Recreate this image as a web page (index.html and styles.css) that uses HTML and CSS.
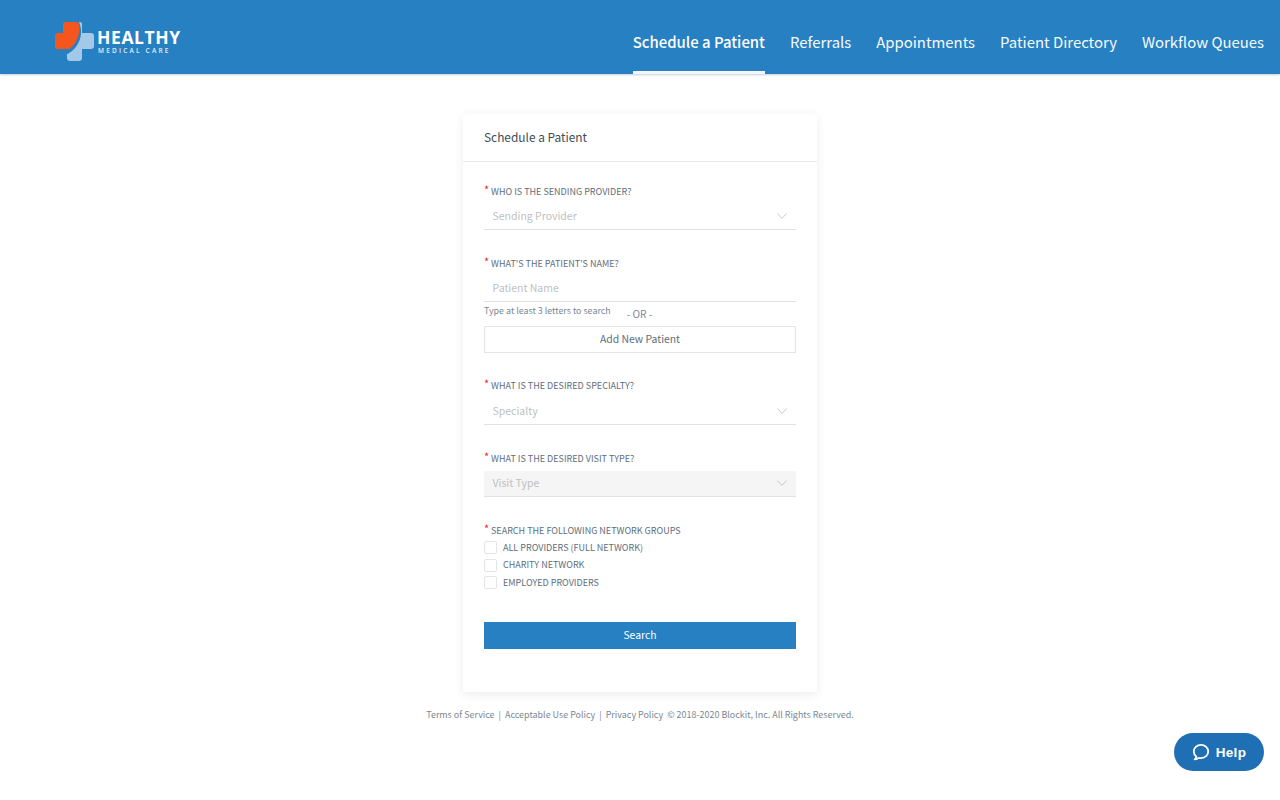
FILE: index.html
```html
<!DOCTYPE html>
<html lang="en">
<head>
<meta charset="utf-8">
<title>Schedule a Patient</title>
<link rel="stylesheet" href="styles.css">
</head>
<body>
<header class="topbar">
  <div class="logo">
    <svg class="logo-mark" width="42" height="42" viewBox="0 0 42 42">
      <path d="M25 1 H26 Q28 1 28 3 V12 H37 Q40 12 40 15 V25 Q40 28 37 28 H28 V37 Q28 40 25 40 H16 Q13 40 13 37 V33 C23 29 31 15 25 1 Z" fill="#a3c8e8"/>
      <path d="M11 1 H22 C25.500 1 26 5 25.500 9 C24.500 18 21 24 15 28 H4 Q1 28 1 25 V15 Q1 12 4 12 H9 V3 Q9 1 11 1 Z" fill="#f4561d"/>
    </svg>
    <div class="logo-text">
      <div class="logo-name">HEALTHY</div>
      <div class="logo-sub">MEDICAL CARE</div>
    </div>
  </div>
  <nav class="nav">
    <a class="nav-item active">Schedule a Patient</a>
    <a class="nav-item">Referrals</a>
    <a class="nav-item">Appointments</a>
    <a class="nav-item">Patient Directory</a>
    <a class="nav-item">Workflow Queues</a>
  </nav>
</header>

<main class="main">
  <section class="card">
    <h1 class="card-title">Schedule a Patient</h1>
    <form class="card-body">
      <div class="field">
        <div class="label"><span class="req">*</span>WHO IS THE SENDING PROVIDER?</div>
        <div class="control">
          <span class="placeholder">Sending Provider</span>
          <svg class="chev" width="10" height="6" viewBox="0 0 10 6"><path d="M.5.5 5 5.500 9.500.5" fill="none" stroke="#c4c8cc"/></svg>
        </div>
      </div>
      <div class="field">
        <div class="label"><span class="req">*</span>WHAT'S THE PATIENT'S NAME?</div>
        <div class="control">
          <span class="placeholder">Patient Name</span>
        </div>
        <div class="hint-row">
          <span class="hint">Type at least 3 letters to search</span>
          <span class="or">- OR -</span>
        </div>
        <div class="outline-btn">Add New Patient</div>
      </div>
      <div class="field">
        <div class="label label-up"><span class="req">*</span>WHAT IS THE DESIRED SPECIALTY?</div>
        <div class="control">
          <span class="placeholder">Specialty</span>
          <svg class="chev" width="10" height="6" viewBox="0 0 10 6"><path d="M.5.5 5 5.500 9.500.5" fill="none" stroke="#c4c8cc"/></svg>
        </div>
      </div>
      <div class="field">
        <div class="label"><span class="req">*</span>WHAT IS THE DESIRED VISIT TYPE?</div>
        <div class="control disabled">
          <span class="placeholder">Visit Type</span>
          <svg class="chev" width="10" height="6" viewBox="0 0 10 6"><path d="M.5.5 5 5.500 9.500.5" fill="none" stroke="#c4c8cc"/></svg>
        </div>
      </div>
      <div class="field field-checks">
        <div class="label"><span class="req">*</span>SEARCH THE FOLLOWING NETWORK GROUPS</div>
        <div class="check-row"><span class="box"></span>ALL PROVIDERS (FULL NETWORK)</div>
        <div class="check-row"><span class="box"></span>CHARITY NETWORK</div>
        <div class="check-row"><span class="box"></span>EMPLOYED PROVIDERS</div>
      </div>
      <div class="primary-btn">Search</div>
    </form>
  </section>
  <footer class="footer">
    <span>Terms of Service</span><span class="sep">|</span><span>Acceptable Use Policy</span><span class="sep">|</span><span>Privacy Policy</span><span class="copy">© 2018-2020 Blockit, Inc. All Rights Reserved.</span>
  </footer>
</main>

<div class="help">
  <svg width="18" height="18" viewBox="0 0 18 18"><path d="M2.600 16.400 C4.500 16.200 5.800 15.700 6.600 14.800 C7.300 15 8.100 15.100 9 15.100 C13.200 15.100 16.200 12.200 16.200 8.500 C16.200 4.800 13.200 1.900 9 1.900 C4.800 1.900 1.800 4.800 1.800 8.500 C1.800 10.500 2.700 12.200 4.200 13.400 C4.200 14.600 3.600 15.600 2.600 16.400 Z" fill="none" stroke="#fff" stroke-width="1.800" stroke-linejoin="round"/></svg>
  <span>Help</span>
</div>
</body>
</html>
```
FILE: styles.css
```css
* { box-sizing: border-box; }
html, body { margin: 0; padding: 0; }
body {
  width: 1280px;
  height: 800px;
  overflow: hidden;
  background: #fff;
  font-family: "Noto Sans CJK SC", "Noto Sans", sans-serif;
  color: #52606d;
}
.topbar {
  height: 74px;
  background: #2680c2;
  box-shadow: 0 1px 2px rgba(60, 90, 130, .3);
  display: flex;
  justify-content: space-between;
  padding: 0 16px 0 54px;
}
.logo { display: flex; align-items: flex-start; padding-top: 21px; gap: 1px; }
.logo-mark { display: block; }
.logo-name {
  font-family: "Open Sans", sans-serif;
  font-weight: 700;
  font-size: 17.500px;
  line-height: 16px;
  letter-spacing: .6px;
  color: #fff;
  margin-top: 8px;
}
.logo-sub {
  font-family: "Open Sans", sans-serif;
  font-weight: 600;
  font-size: 6.500px;
  line-height: 8px;
  letter-spacing: 2.200px;
  color: #e3eef8;
  margin-left: 1px;
  margin-top: 2px;
}
.nav { display: flex; gap: 25px; }
.nav-item {
  display: block;
  height: 74px;
  padding-top: 30px;
  font-size: 14.900px;
  line-height: 24px;
  color: #f6fafd;
}
.nav-item.active {
  font-weight: 500;
  color: #fff;
  border-bottom: 3px solid #f0f6fb;
}
.main { display: flex; flex-direction: column; align-items: center; padding-top: 40px; }
.card {
  width: 354px;
  height: 578px;
  background: #fff;
  border-radius: 2px;
  box-shadow: 0 2px 10px rgba(50, 60, 80, .1);
}
.card-title {
  margin: 0;
  height: 48px;
  padding: 13px 21px 0;
  font-size: 11.900px;
  line-height: 20px;
  font-weight: 400;
  color: #3e4c59;
  border-bottom: 1px solid #e8eaed;
}
.card-body { padding: 20px 21px 0 21px; display: flex; flex-direction: column; }
.field { margin-bottom: 24px; }
.field-checks { margin-bottom: 30px; }
.label {
  height: 18px;
  font-size: 9px;
  line-height: 20px;
  color: #616e7c;
  white-space: nowrap;
}
.label-up { line-height: 18px; }
.req {
  display: inline-block;
  width: 7px;
  line-height: 0;
  color: #f5222d;
  font-size: 11px;
  position: relative;
  top: -1px;
}
.control {
  margin-top: 4px;
  height: 26px;
  padding: 0 9px 2px 8.500px;
  border-bottom: 1px solid #dfe2e6;
  display: flex;
  align-items: center;
  justify-content: space-between;
}
.control.disabled { background: #f5f5f5; }
.placeholder { font-size: 10.500px; line-height: 20px; color: #bfbfbf; }
.hint-row { height: 24px; position: relative; display: flex; }
.hint { font-size: 8.900px; line-height: 18px; color: #7b8794; }
.or { margin-left: 16px; padding-top: 3px; font-size: 10.200px; line-height: 18px; color: #7b8794; }
.outline-btn {
  height: 27px;
  border: 1px solid #e1e4e8;
  font-size: 10.400px;
  line-height: 24px;
  text-align: center;
  color: #616e7c;
}
.check-row {
  height: 17.500px;
  display: flex;
  align-items: center;
  gap: 6px;
  font-size: 9px;
  line-height: 14px;
  color: #616e7c;
}
.box {
  width: 13px;
  height: 13px;
  border: 1px solid #e1e4e8;
  border-radius: 2px;
  background: #fff;
}
.primary-btn {
  height: 27px;
  background: #2680c2;
  color: #fff;
  font-size: 10.400px;
  line-height: 26px;
  text-align: center;
}
.footer {
  margin-top: 16px;
  font-size: 8.950px;
  line-height: 14px;
  color: #7b8794;
  white-space: nowrap;
}
.sep { margin: 0 4px; }
.copy { margin-left: 4px; }
.help {
  position: absolute;
  left: 1174px;
  top: 733px;
  width: 90px;
  height: 38px;
  border-radius: 19px;
  background: #1f6fb5;
  display: flex;
  align-items: center;
  justify-content: center;
  gap: 6px;
  color: #fff;
  font-family: "Liberation Sans", sans-serif;
  font-weight: 700;
  font-size: 13.500px;
  letter-spacing: .3px;
}
```
